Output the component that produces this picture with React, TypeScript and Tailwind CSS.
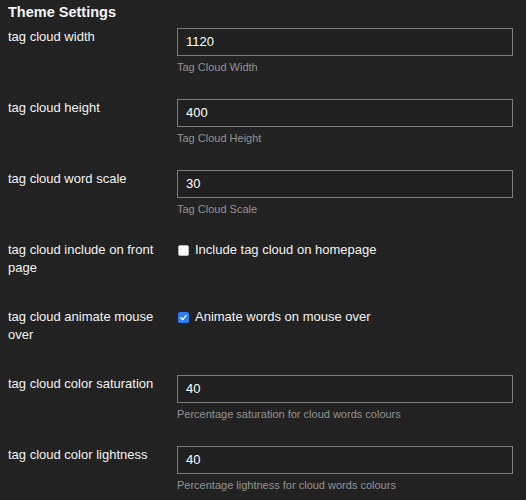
import React from "react";

type TextSetting = {
  kind: "text";
  label: string;
  value: string;
  help: string;
};

type BoolSetting = {
  kind: "bool";
  label: string;
  checked: boolean;
  text: string;
};

type Setting = TextSetting | BoolSetting;

const settings: Setting[] = [
  { kind: "text", label: "tag cloud width", value: "1120", help: "Tag Cloud Width" },
  { kind: "text", label: "tag cloud height", value: "400", help: "Tag Cloud Height" },
  { kind: "text", label: "tag cloud word scale", value: "30", help: "Tag Cloud Scale" },
  { kind: "bool", label: "tag cloud include on front page", checked: false, text: "Include tag cloud on homepage" },
  { kind: "bool", label: "tag cloud animate mouse over", checked: true, text: "Animate words on mouse over" },
  {
    kind: "text",
    label: "tag cloud color saturation",
    value: "40",
    help: "Percentage saturation for cloud words colours",
  },
  {
    kind: "text",
    label: "tag cloud color lightness",
    value: "40",
    help: "Percentage lightness for cloud words colours",
  },
];

const Checkbox: React.FC<{ checked: boolean }> = ({ checked }) =>
  checked ? (
    <span className="flex h-[11px] w-[11px] shrink-0 items-center justify-center rounded-[2px] bg-[#2f7df6]">
      <svg viewBox="0 0 12 12" className="h-[9px] w-[9px]" fill="none">
        <path d="M2.5 6.3 L5 8.8 L9.6 3.2" stroke="white" strokeWidth="1.8" strokeLinecap="round" strokeLinejoin="round" />
      </svg>
    </span>
  ) : (
    <span className="h-[11px] w-[11px] shrink-0 rounded-[2px] border border-[#bdbdbd] bg-white" />
  );

const SettingRow: React.FC<{ setting: Setting }> = ({ setting }) => (
  <div className={`flex pl-2 ${setting.kind === "text" ? "mb-[25px]" : "mb-[31px]"}`}>
    <div className="w-[169px] shrink-0 pr-[12px] text-[13px] leading-[18px] text-[#f2f2f2]">
      {setting.label}
    </div>
    <div className="w-[336px]">
      {setting.kind === "text" ? (
        <>
          <div className="flex h-[28px] items-center border border-[#7c7c7c] bg-[#202020] px-2 text-[13px] text-white">
            {setting.value}
          </div>
          <div className="mt-[4px] text-[11px] leading-[14px] text-[#929292]">{setting.help}</div>
        </>
      ) : (
        <label className="flex h-[18px] items-center gap-[6px] pl-[1px] text-[13px] leading-[18px] text-[#f2f2f2]">
          <Checkbox checked={setting.checked} />
          <span>{setting.text}</span>
        </label>
      )}
    </div>
  </div>
);

export default function App() {
  return (
    <div
      className="min-h-[500px] w-[526px] bg-[#222222] pt-[2px]"
      style={{ fontFamily: '"Liberation Sans", Arial, Helvetica, sans-serif' }}
    >
      <h2 className="mb-[6px] pl-2 text-[14.5px] font-bold leading-[20px] text-[#f5f5f5]">Theme Settings</h2>
      {settings.map((s) => (
        <SettingRow key={s.label} setting={s} />
      ))}
    </div>
  );
}
